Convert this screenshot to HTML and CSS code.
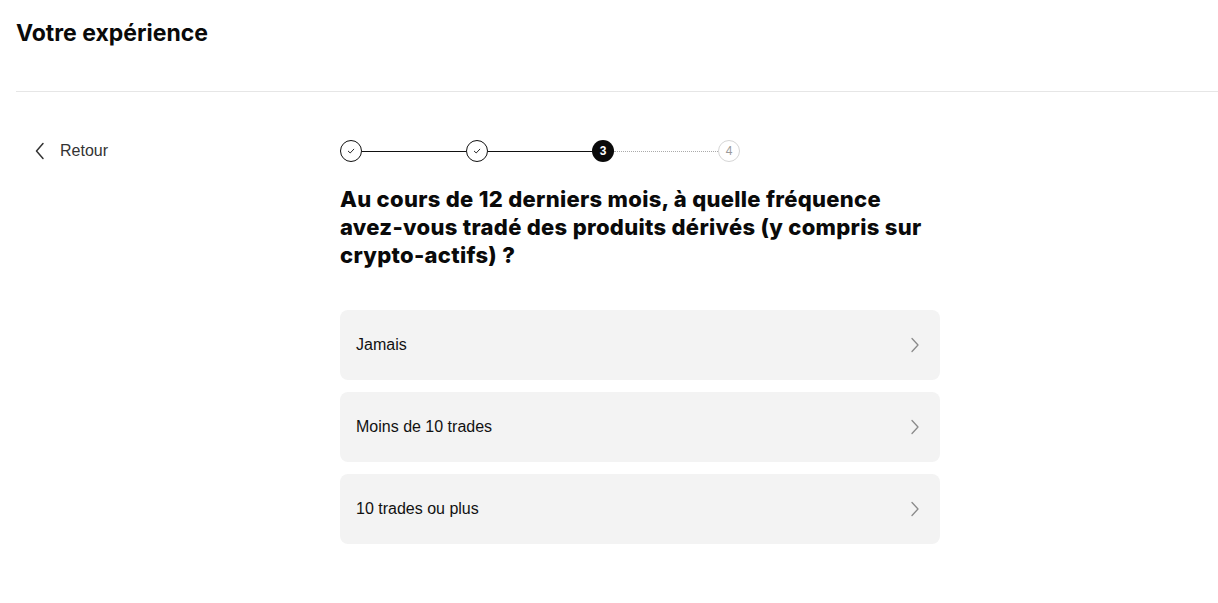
FILE: index.html
```html
<!DOCTYPE html>
<html lang="fr">
<head>
<meta charset="utf-8">
<title>Votre expérience</title>
<link rel="stylesheet" href="styles.css">
</head>
<body>
<header class="topbar">
  <h1 class="page-title">Votre expérience</h1>
</header>
<main class="layout">
  <aside class="side">
    <a class="back" href="#">
      <svg class="back-icon" width="12" height="18" viewBox="0 0 12 18"><path d="M9 1.5 L2.5 9 L9 16.5" fill="none" stroke="#333" stroke-width="1.5" stroke-linecap="round" stroke-linejoin="round"/></svg>
      <span>Retour</span>
    </a>
  </aside>
  <section class="content">
    <div class="stepper">
      <span class="step done"><svg width="10" height="10" viewBox="0 0 10 10"><path d="M2.3 5.2 L4.2 7 L7.8 3.2" fill="none" stroke="#111" stroke-width="0.9" stroke-linecap="round" stroke-linejoin="round"/></svg></span>
      <span class="bar solid"></span>
      <span class="step done"><svg width="10" height="10" viewBox="0 0 10 10"><path d="M2.3 5.2 L4.2 7 L7.8 3.2" fill="none" stroke="#111" stroke-width="0.9" stroke-linecap="round" stroke-linejoin="round"/></svg></span>
      <span class="bar solid"></span>
      <span class="step current">3</span>
      <span class="bar dotted"></span>
      <span class="step todo">4</span>
    </div>
    <h2 class="question">Au cours de 12 derniers mois, à quelle fréquence <span class="nowrap">avez-vous</span> tradé des produits dérivés (y compris sur <span class="nowrap">crypto-actifs)</span> ?</h2>
    <ul class="options">
      <li class="option"><span>Jamais</span><svg class="chev" width="10" height="16" viewBox="0 0 10 16"><path d="M2 1.5 L8 8 L2 14.5" fill="none" stroke="#8a8a8a" stroke-width="1.3" stroke-linecap="round" stroke-linejoin="round"/></svg></li>
      <li class="option"><span>Moins de 10 trades</span><svg class="chev" width="10" height="16" viewBox="0 0 10 16"><path d="M2 1.5 L8 8 L2 14.5" fill="none" stroke="#8a8a8a" stroke-width="1.3" stroke-linecap="round" stroke-linejoin="round"/></svg></li>
      <li class="option"><span>10 trades ou plus</span><svg class="chev" width="10" height="16" viewBox="0 0 10 16"><path d="M2 1.5 L8 8 L2 14.5" fill="none" stroke="#8a8a8a" stroke-width="1.3" stroke-linecap="round" stroke-linejoin="round"/></svg></li>
    </ul>
  </section>
</main>
</body>
</html>
```
FILE: styles.css
```css
* { box-sizing: border-box; }
html, body { margin: 0; padding: 0; background: #fff; }
body { font-family: "Liberation Sans", Arial, sans-serif; color: #111; }

.topbar {
  margin-left: 16px;
  height: 92px;
  border-bottom: 1px solid #e6e6e6;
  padding-top: 19px;
}
.page-title {
  margin: 0;
  font-family: Inter, "Liberation Sans", sans-serif;
  font-weight: 700;
  font-size: 23px;
  line-height: 28px;
  letter-spacing: 0;
  color: #0a0a0a;
}

.layout {
  display: flex;
  padding-top: 48px;
}
.side {
  width: 340px;
  padding-left: 34px;
}
.back {
  display: flex;
  align-items: center;
  gap: 14px;
  text-decoration: none;
  color: #333;
  font-size: 16px;
  height: 22px;
}
.back-icon { display: block; }

.content { width: 600px; }

.stepper {
  display: flex;
  align-items: center;
  width: 400px;
  height: 22px;
}
.step {
  flex: none;
  width: 22px;
  height: 22px;
  border-radius: 50%;
  display: flex;
  align-items: center;
  justify-content: center;
  font-size: 12px;
  font-weight: 700;
}
.step.done { border: 1px solid #111; }
.step.current { background: #0a0a0a; color: #fff; }
.step.todo { border: 1px solid #d6d6d6; color: #9a9a9a; font-weight: 400; }
.bar { flex: 1; height: 0; }
.bar.solid { border-top: 1px solid #111; }
.bar.dotted { border-top: 1px dotted #aaa; }

.question {
  margin: 23px 0 0;
  font-family: Inter, "Liberation Sans", sans-serif;
  font-weight: 800;
  font-size: 22px;
  line-height: 28px;
  letter-spacing: 0.3px;
  color: #0a0a0a;
  max-width: 600px;
}
.nowrap { white-space: nowrap; }

.options {
  list-style: none;
  margin: 41px 0 0;
  padding: 0;
  display: flex;
  flex-direction: column;
  gap: 12px;
}
.option {
  height: 70px;
  background: #f3f3f3;
  border-radius: 8px;
  display: flex;
  align-items: center;
  justify-content: space-between;
  padding: 0 20px 0 16px;
  font-size: 16px;
  color: #111;
}
.chev { display: block; }
```
